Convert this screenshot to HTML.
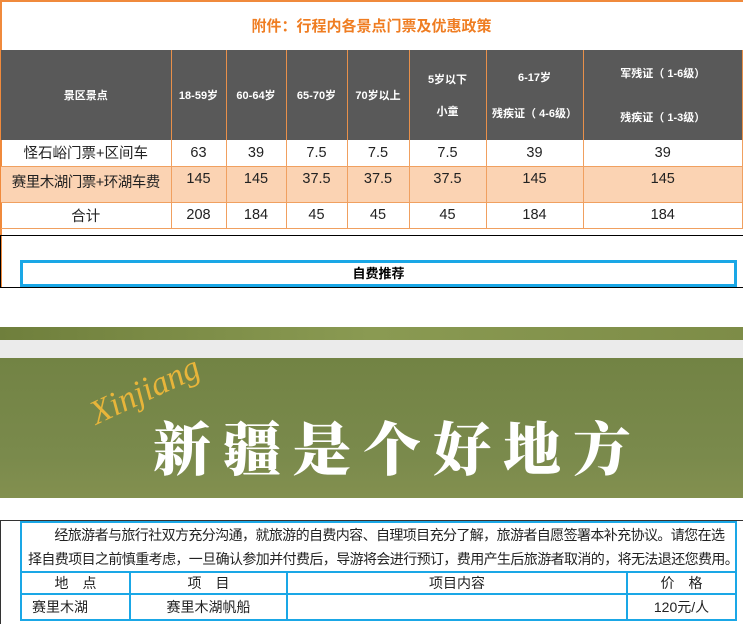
<!DOCTYPE html>
<html><head><meta charset="utf-8"><style>
*{margin:0;padding:0;box-sizing:border-box}
body{width:743px;height:624px;position:relative;background:#fff;font-family:"Liberation Sans","Noto Sans CJK SC",sans-serif;overflow:hidden}
.a{position:absolute}
table{border-collapse:collapse;position:absolute}
.t1 td{text-align:center;font-size:14.5px;color:#222;border-right:1px solid #f0a060;border-bottom:1px solid #f0a060}
.t1 tr.h td{background:#595959;color:#fff;font-size:11px;font-weight:bold;border-right:1px solid #e8904a;border-bottom:none}
.t2 td{border:2px solid #1aa7e6;font-size:14px;color:#222;text-align:center}
</style></head><body>
<div class="a" style="left:0;top:0;width:743px;height:2px;background:#f08a3c"></div>
<div class="a" style="left:0;top:0;width:2px;height:287px;background:#f08a3c"></div>
<div class="a" style="left:0;top:15px;width:743px;text-align:center;font-size:15px;font-weight:bold;color:#ef7d22">附件：行程内各景点门票及优惠政策</div>
<table class="t1" style="left:1px;top:50px;width:742px">
<colgroup><col style="width:170px"><col style="width:55px"><col style="width:60px"><col style="width:61px"><col style="width:62px"><col style="width:77px"><col style="width:97px"><col></colgroup>
<tr class="h" style="height:90px"><td>景区景点</td><td>18-59岁</td><td>60-64岁</td><td>65-70岁</td><td>70岁以上</td><td><div>5岁以下</div><div style="margin-top:16px">小童</div></td><td><div>6-17岁</div><div style="margin-top:20px">残疾证（ 4-6级）</div></td><td><div>军残证（ 1-6级）</div><div style="margin-top:28px">残疾证（ 1-3级）</div></td></tr>
<tr style="height:26px"><td>怪石峪门票+区间车</td><td>63</td><td>39</td><td>7.5</td><td>7.5</td><td>7.5</td><td>39</td><td>39</td></tr>
<tr style="height:36px;background:#fbd3b3"><td style="vertical-align:top;padding-top:4px;letter-spacing:-0.5px">赛里木湖门票+环湖车费</td><td style="vertical-align:top;padding-top:4px">145</td><td style="vertical-align:top;padding-top:4px">145</td><td style="vertical-align:top;padding-top:4px">37.5</td><td style="vertical-align:top;padding-top:4px">37.5</td><td style="vertical-align:top;padding-top:4px">37.5</td><td style="vertical-align:top;padding-top:4px">145</td><td style="vertical-align:top;padding-top:4px">145</td></tr>
<tr style="height:26px"><td>合计</td><td>208</td><td>184</td><td>45</td><td>45</td><td>45</td><td>184</td><td>184</td></tr>
</table>
<div class="a" style="left:0;top:235px;width:743px;height:1px;background:#000"></div>
<div class="a" style="left:0;top:235px;width:1px;height:53px;background:#000"></div>
<div class="a" style="left:20px;top:260px;width:717px;height:27px;border:3px solid #1aa7e6;text-align:center;font-size:13px;font-weight:bold;line-height:21px">自费推荐</div>
<div class="a" style="left:0;top:287px;width:743px;height:1px;background:#000"></div>
<div class="a" style="left:0;top:327px;width:743px;height:13px;background:linear-gradient(90deg,#6f7f3c,#8a9a52,#7d8c47)"></div>
<div class="a" style="left:0;top:340px;width:743px;height:18px;background:#ebebeb"></div>
<div class="a" style="left:0;top:358px;width:743px;height:140px;background:linear-gradient(180deg,#728344,#7a8a4c 70%,#83904f)"></div>
<div class="a" style="left:100px;top:395px;font-family:'Liberation Serif',serif;font-style:italic;font-size:34px;color:#e8b53a;transform:rotate(-25deg);transform-origin:left bottom">Xinjiang</div>
<div class="a" style="left:153px;top:410px;font-family:'Noto Serif CJK SC',serif;font-weight:900;font-size:58px;color:#fff;letter-spacing:12px;line-height:70px">新疆是个好地方</div>
<div class="a" style="left:0;top:520px;width:743px;height:1px;background:#333"></div>
<div class="a" style="left:0;top:520px;width:1px;height:104px;background:#333"></div>
<div class="a" style="left:20px;top:521px;width:717px;height:51px;border:2px solid #1aa7e6;border-bottom:none;font-size:14px;line-height:24px;padding:0 0 0 6px;color:#222;letter-spacing:-0.6px;white-space:nowrap;overflow:hidden">&emsp;&ensp;&nbsp;&nbsp;经旅游者与旅行社双方充分沟通，就旅游的自费内容、自理项目充分了解，旅游者自愿签署本补充协议。请您在选<br>择自费项目之前慎重考虑，一旦确认参加并付费后，导游将会进行预订，费用产生后旅游者取消的，将无法退还您费用。</div>
<table class="t2" style="left:20px;top:571px;width:717px">
<colgroup><col style="width:109px"><col style="width:157px"><col style="width:340px"><col></colgroup>
<tr style="height:22px"><td>地　点</td><td>项　目</td><td>项目内容</td><td>价　格</td></tr>
<tr style="height:26px"><td style="text-align:left;padding-left:10px">赛里木湖</td><td>赛里木湖帆船</td><td></td><td>120元/人</td></tr>
</table>
</body></html>
